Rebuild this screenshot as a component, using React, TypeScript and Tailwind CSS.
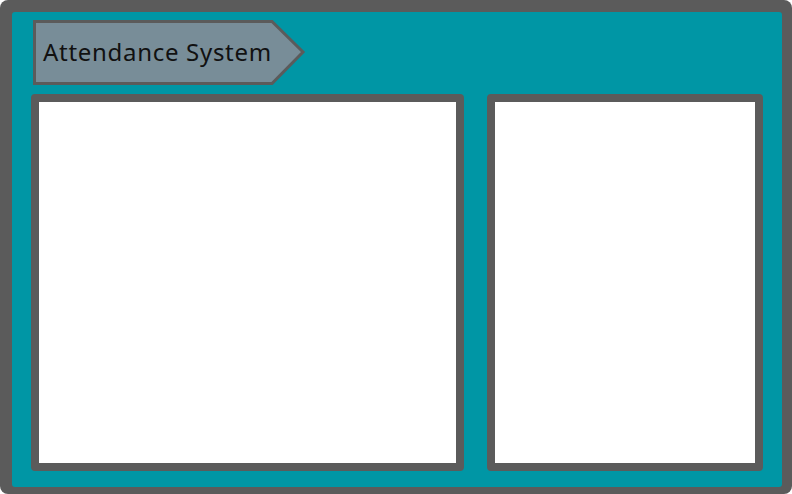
import React from "react";

export default function App() {
  return (
    <div className="w-[792px] h-[494px] bg-white overflow-hidden">
      <div className="w-[792px] h-[494px] bg-[#5b5b5b] rounded-[8px] pl-[12px] pt-[12px] pr-[10px] pb-[7px]">
        <div className="w-full h-full bg-[#0096a5] rounded-[3px] flex flex-col pl-[19px] pr-[19px] pt-[8px] pb-[16px]">
          <div className="relative w-[274px] h-[66px] ml-[1px] shrink-0">
            <svg width="274" height="66" viewBox="0 0 274 66" className="absolute inset-0">
              <polygon
                points="2.5,1.5 240,1.5 271,32 240,63.5 2.5,63.5"
                fill="#788d98"
                stroke="#5b5b5b"
                strokeWidth="3"
                strokeLinejoin="miter"
              />
            </svg>
            <div
              className="relative h-full flex items-center pl-[11px] pb-[2px] text-[24px] text-[#111] tracking-[0.7px]"
              style={{ fontFamily: "'Noto Sans', sans-serif" }}
            >
              Attendance System
            </div>
          </div>
          <div className="flex-1 flex gap-[23px] mt-[8px]">
            <div className="w-[433px] h-full bg-white border-[8px] border-[#5b5b5b] rounded-[4px]" />
            <div className="w-[276px] h-full bg-white border-[8px] border-[#5b5b5b] rounded-[4px]" />
          </div>
        </div>
      </div>
    </div>
  );
}
